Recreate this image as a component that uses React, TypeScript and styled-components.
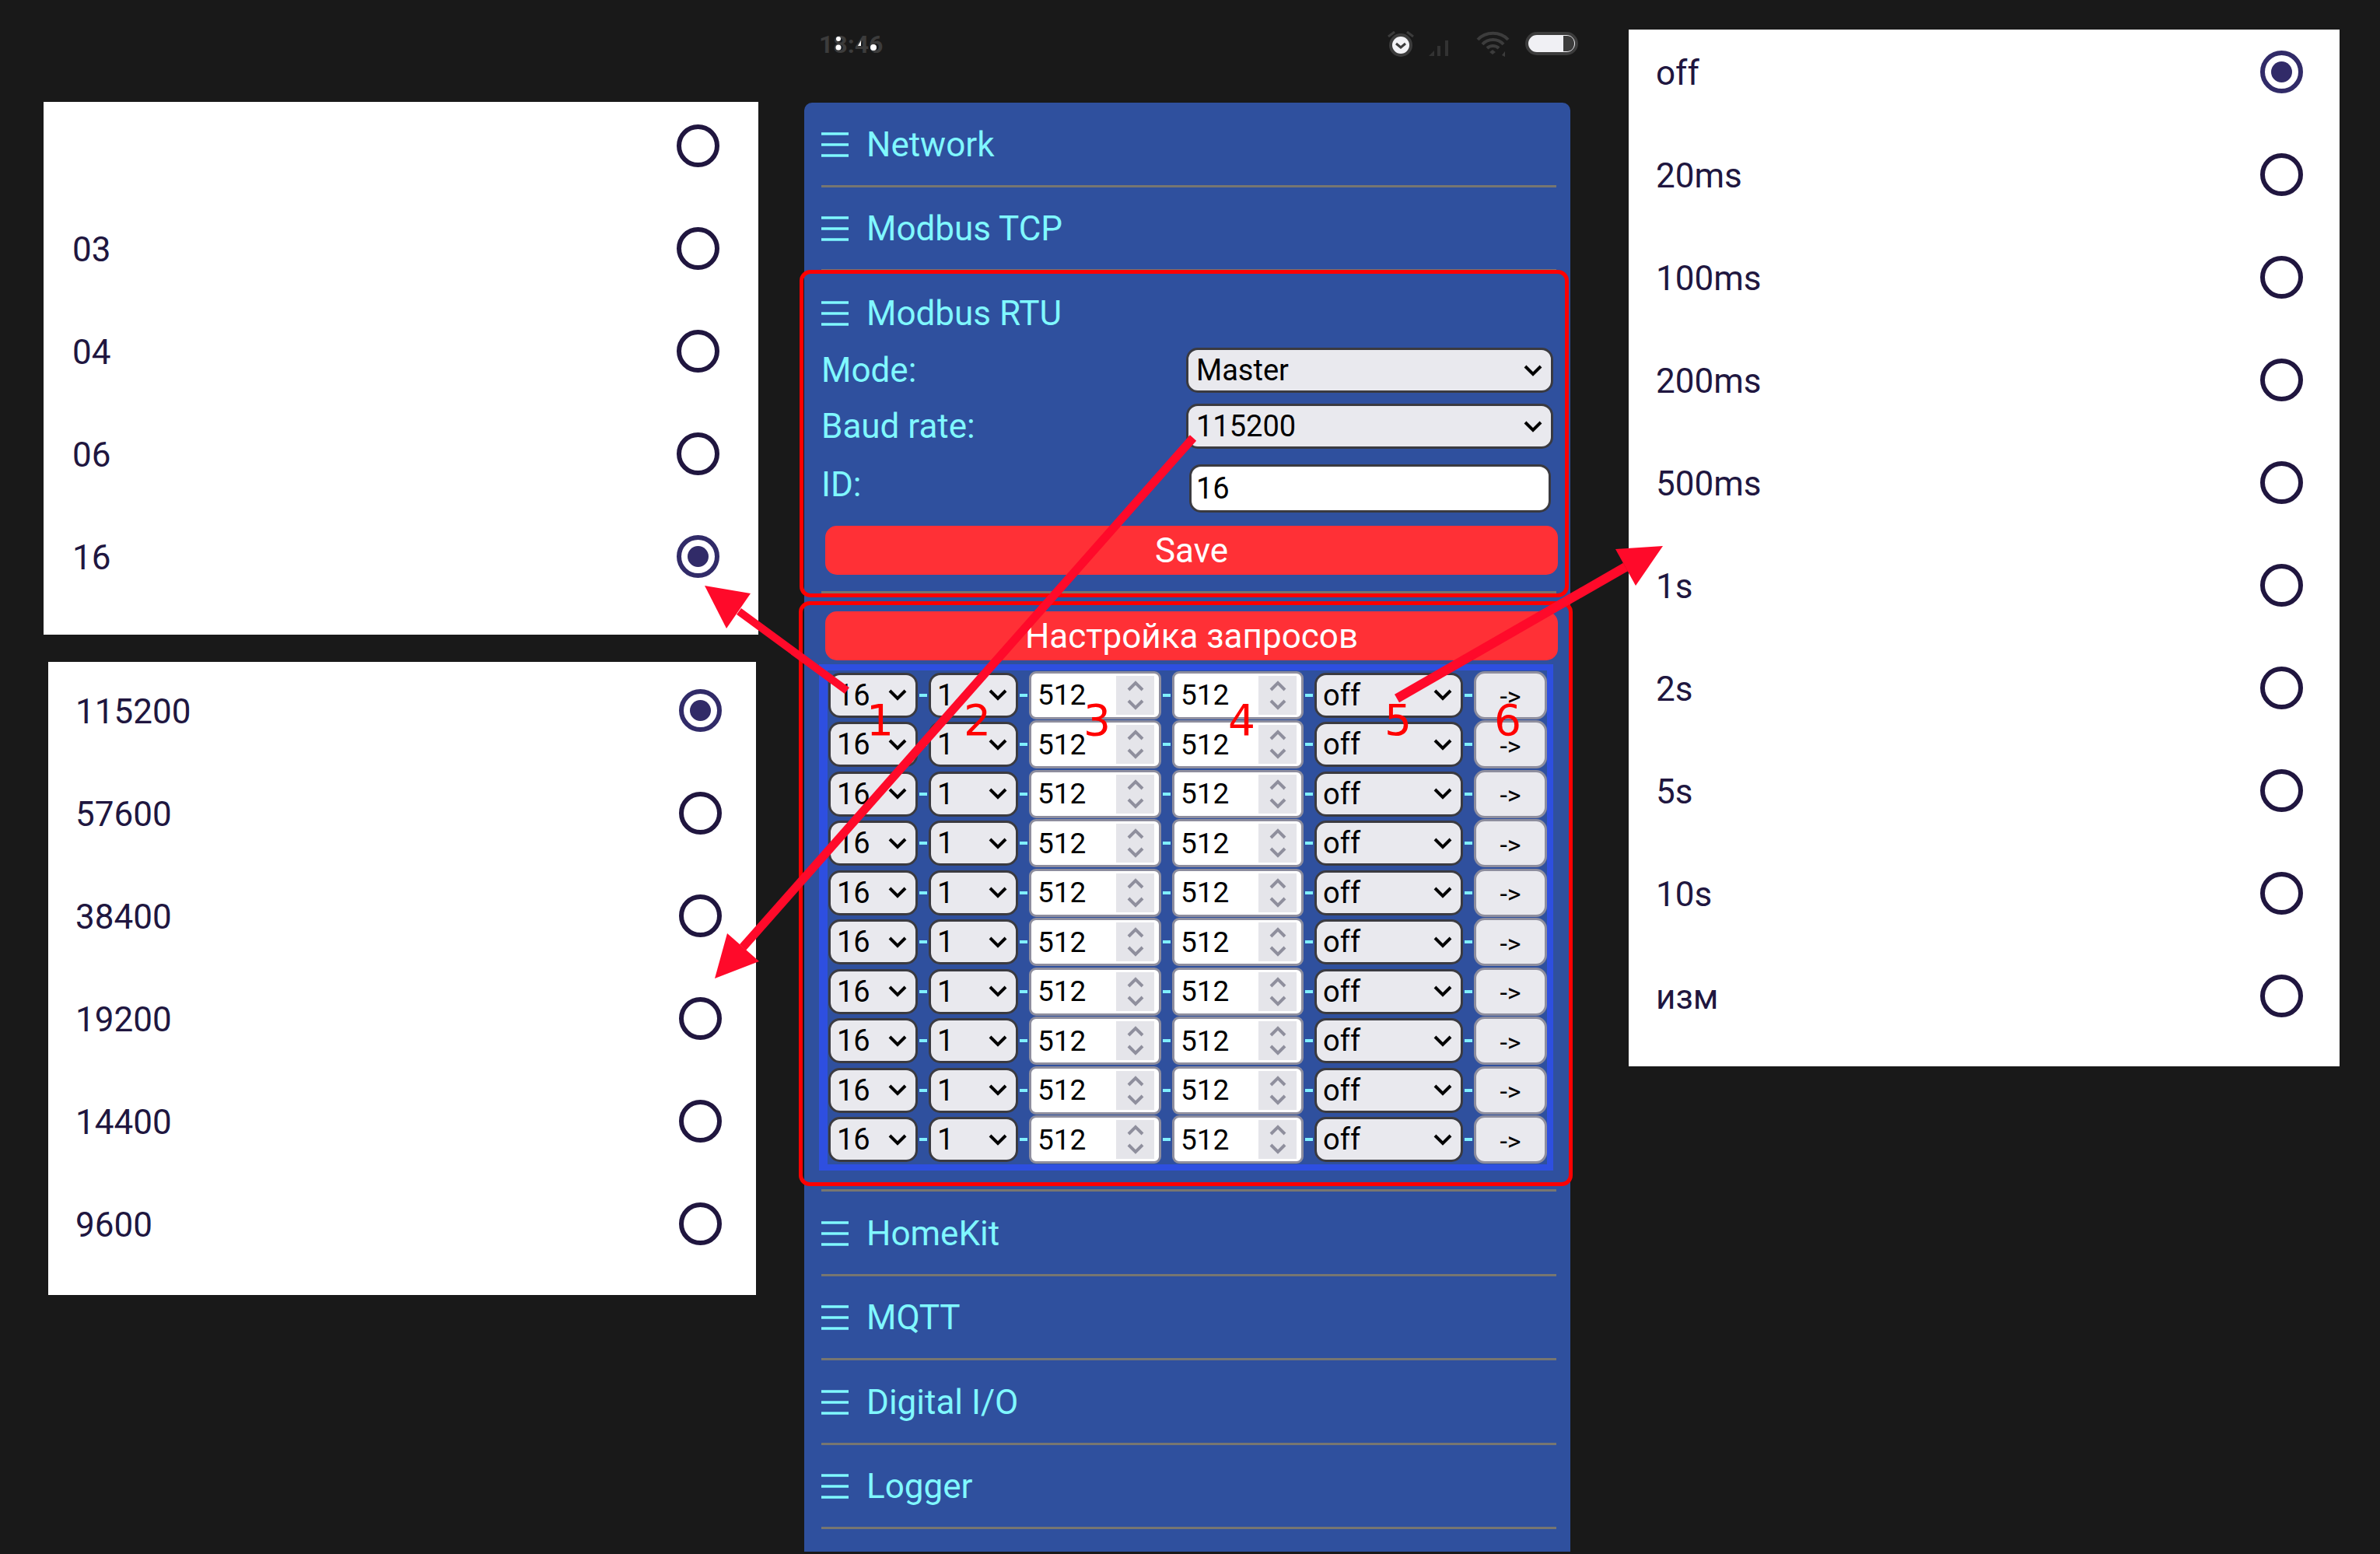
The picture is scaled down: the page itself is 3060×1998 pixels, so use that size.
import React from 'react';
import styled, { createGlobalStyle } from 'styled-components';

const Global = createGlobalStyle`
  html, body { margin: 0; padding: 0; background: #191919; }
  * { box-sizing: border-box; }
`;

const Page = styled.div`
  position: relative;
  width: 3060px;
  height: 1998px;
  overflow: hidden;
  display: flex;
  align-items: flex-start;
  background: #191919;
  font-family: Roboto, "Liberation Sans", sans-serif;
`;

const LeftColumn = styled.div`
  width: 919px;
  margin: 131px 0 0 56px;
  display: flex;
  flex-direction: column;
  align-items: flex-start;
  gap: 35px;
`;

const OptionPanel = styled.div<{ $w: number; $ml?: number; $pt: number; $pb: number; $pl: number; $pr: number; $row: number; $gap: number }>`
  width: ${p => p.$w}px;
  margin-left: ${p => p.$ml ?? 0}px;
  padding: ${p => p.$pt}px ${p => p.$pr}px ${p => p.$pb}px ${p => p.$pl}px;
  background: #fff;
  display: flex;
  flex-direction: column;
  gap: ${p => p.$gap}px;
  & > div { height: ${p => p.$row}px; }
`;

const OptionRow = styled.div`
  display: flex;
  align-items: center;
  justify-content: space-between;
  font-size: 44px;
  color: #20163f;
`;

const OptionLabel = styled.span`
  position: relative;
  top: 2px;
`;

const Radio = styled.span<{ $on?: boolean }>`
  width: 55px;
  height: 55px;
  flex: none;
  border-radius: 50%;
  border: 6px solid ${p => (p.$on ? '#312b68' : '#20163f')};
  display: flex;
  align-items: center;
  justify-content: center;
  &::after {
    content: '';
    display: ${p => (p.$on ? 'block' : 'none')};
    width: 27px;
    height: 27px;
    border-radius: 50%;
    background: #312b68;
  }
`;

const Phone = styled.div`
  width: 985px;
  margin-left: 59px;
  display: flex;
  flex-direction: column;
`;

const StatusBar = styled.div`
  height: 132px;
  margin-right: -10px;
  padding: 40px 0 0 19px;
  display: flex;
  align-items: flex-start;
  justify-content: space-between;
`;

const Time = styled.div`
  position: relative;
  font-size: 32px;
  font-weight: 700;
  line-height: 34px;
  color: #3c3c3c;
`;

const TimeCounters = styled.svg`
  position: absolute;
  left: 0;
  top: -2px;
`;

const StatusIcons = styled.div`
  display: flex;
  align-items: flex-start;
`;

const StatusIcon = styled.svg<{ $ml: number }>`
  margin-left: ${p => p.$ml}px;
  display: block;
`;

const Panel = styled.div`
  background: #2f509e;
  border-radius: 10px 10px 0 0;
  padding: 0 18px 29px 22px;
`;

const Section = styled.div`
  border-bottom: 3px solid #777671;
`;

const Header = styled.div<{ $open?: boolean }>`
  height: ${p => (p.$open ? '98px' : '105.5px')};
  padding-top: ${p => (p.$open ? '10px' : '2px')};
  display: flex;
  align-items: center;
  gap: 23px;
  font-size: 44px;
  color: #80f8ff;
`;

const FieldRow = styled.div<{ $h: number; $mb: number }>`
  height: ${p => p.$h}px;
  margin-bottom: ${p => p.$mb}px;
  padding-right: 4px;
  display: flex;
  align-items: center;
  justify-content: space-between;
`;

const FieldLabel = styled.span<{ $up?: number }>`
  font-size: 44px;
  color: #80f8ff;
  position: relative;
  top: ${p => -(p.$up ?? 0)}px;
`;

const SelectBox = styled.div<{ $w: number; $pl?: number }>`
  width: ${p => p.$w}px;
  height: 58px;
  flex: none;
  padding: 0 11px 0 ${p => p.$pl ?? 8}px;
  display: flex;
  align-items: center;
  justify-content: space-between;
  background: #e9e9ee;
  border: 3px solid #3a3a40;
  border-radius: 15px;
  font-size: 38px;
  color: #000;
`;

const TextInput = styled.div`
  width: 465px;
  height: 62px;
  margin-right: 3px;
  padding-left: 6px;
  display: flex;
  align-items: center;
  background: #fff;
  border: 3px solid #3a3a40;
  border-radius: 15px;
  font-size: 38px;
  color: #000;
`;

const RedButton = styled.div<{ $mt?: number; $mb?: number }>`
  height: 63px;
  margin: ${p => p.$mt ?? 0}px -2px ${p => p.$mb ?? 0}px 5px;
  display: flex;
  align-items: center;
  justify-content: center;
  background: #ff3036;
  border-radius: 15px;
  font-size: 44px;
  color: #fff;
`;

const BlueFrame = styled.div`
  margin: 0 4px 24px -3px;
  border-style: solid;
  border-color: #2e4fe0;
  border-width: 8px 8px 8px 11px;
  display: flex;
  flex-direction: column;
`;

const QueryRow = styled.div`
  height: 63.5px;
  padding-left: 1px;
  display: flex;
  align-items: center;
`;

const Dash = styled.span`
  width: 10px;
  height: 4px;
  margin: 0 2px;
  flex: none;
  background: #80f0ff;
`;

const NumberBox = styled.div<{ $w: number }>`
  position: relative;
  width: ${p => p.$w}px;
  height: 62px;
  flex: none;
  padding-left: 8px;
  display: flex;
  align-items: center;
  background: #fff;
  border: 3px solid #8e8e9e;
  border-radius: 9px;
  font-size: 37px;
  color: #000;
`;

const Spinner = styled.span`
  position: absolute;
  right: 6px;
  top: 3px;
  width: 49px;
  height: 50px;
  background: #e5e5ea;
  display: flex;
  align-items: center;
  justify-content: center;
`;

const GoButton = styled.div`
  width: 94px;
  height: 62px;
  flex: none;
  padding-top: 3px;
  display: flex;
  align-items: center;
  justify-content: center;
  background: #e9e9ee;
  border: 3px solid #8e8e9e;
  border-radius: 14px;
  font-size: 34px;
  color: #000;
`;

const RightPanelSlot = styled.div`
  margin: 38px 0 0 75px;
`;

const Outline = styled.div<{ $x: number; $y: number; $w: number; $h: number }>`
  position: absolute;
  left: ${p => p.$x}px;
  top: ${p => p.$y}px;
  width: ${p => p.$w}px;
  height: ${p => p.$h}px;
  border: 5px solid #ff0000;
  border-radius: 14px;
  pointer-events: none;
`;

const Marker = styled.span<{ $x: number }>`
  position: absolute;
  left: ${p => p.$x}px;
  top: 899px;
  font-family: "DejaVu Sans", sans-serif;
  font-size: 55px;
  line-height: 55px;
  color: #ff0000;
`;

const ArrowLayer = styled.svg`
  position: absolute;
  left: 0;
  top: 0;
  pointer-events: none;
`;

const Chevron = () => (
  <svg width="24" height="15" viewBox="0 0 24 15">
    <path d="M2 2 L12 12 L22 2" fill="none" stroke="#000" strokeWidth="4" />
  </svg>
);

const SpinArrows = () => (
  <svg width="24" height="42" viewBox="0 0 24 42">
    <path d="M3 14 L12 5 L21 14 M3 28 L12 37 L21 28" fill="none" stroke="#8f8f9d" strokeWidth="4" />
  </svg>
);

const Burger = () => (
  <svg width="35" height="32" viewBox="0 0 35 32">
    <path d="M0 2 H35 M0 16 H35 M0 30 H35" stroke="#80f8ff" strokeWidth="3.5" />
  </svg>
);

const Options = ({ items, on }: { items: string[]; on: number }) => (
  <>
    {items.map((t, i) => (
      <OptionRow key={i}>
        <OptionLabel>{t}</OptionLabel>
        <Radio $on={i === on} />
      </OptionRow>
    ))}
  </>
);

const Item = ({ title }: { title: string }) => (
  <Section>
    <Header>
      <Burger />
      {title}
    </Header>
  </Section>
);

const rows = Array.from({ length: 10 }, (_, i) => i);

export default function App() {
  return (
    <Page>
      <Global />
      <LeftColumn>
        <OptionPanel $w={919} $pt={0} $pb={45} $pl={37} $pr={50} $row={112} $gap={20}>
          <Options items={['', '03', '04', '06', '16']} on={4} />
        </OptionPanel>
        <OptionPanel $w={910} $ml={6} $pt={6} $pb={36} $pl={35} $pr={44} $row={112} $gap={20}>
          <Options items={['115200', '57600', '38400', '19200', '14400', '9600']} on={0} />
        </OptionPanel>
      </LeftColumn>

      <Phone>
        <StatusBar>
          <Time>
            18:46
            <TimeCounters width="80" height="36" viewBox="0 0 80 36">
              <circle cx="25" cy="12" r="3" fill="#fff" />
              <circle cx="25" cy="23" r="3.5" fill="#fff" />
              <path d="M50 21 L54 14 V21 Z" fill="#fff" />
              <circle cx="70" cy="23" r="4" fill="#fff" />
            </TimeCounters>
          </Time>
          <StatusIcons>
            <StatusIcon $ml={0} width="34" height="34" viewBox="0 0 34 34">
              <circle cx="17" cy="18" r="15" fill="#3c3c3c" />
              <circle cx="17" cy="18" r="11" fill="#f2f2f5" />
              <path d="M11 16 L17 21 L23 16" fill="none" stroke="#3c3c3c" strokeWidth="3" />
              <path d="M1 7 L9 1 M33 7 L25 1" stroke="#3c3c3c" strokeWidth="3" />
            </StatusIcon>
            <StatusIcon $ml={19} width="27" height="34" viewBox="0 0 27 34">
              <path d="M0 32 L7 25 V32 Z" fill="#333" />
              <rect x="11" y="19" width="4" height="13" fill="#333" />
              <rect x="21" y="12" width="4" height="20" fill="#333" />
            </StatusIcon>
            <StatusIcon $ml={34} width="43" height="34" viewBox="0 0 43 34">
              <path d="M2 11 C12 0 31 0 41 11 M8 17 C15 9 28 9 35 17 M14 22 C18 18 25 18 29 22" fill="none" stroke="#3c3c3c" strokeWidth="4" />
              <path d="M17 27 L21 24 L25 27 L21 30 Z" fill="#3c3c3c" />
              <path d="M37 26 V33 L33 31 Z" fill="#3c3c3c" />
            </StatusIcon>
            <StatusIcon $ml={20} width="68" height="32" viewBox="0 0 68 32">
              <rect x="2" y="3" width="64" height="26" rx="13" fill="#f0f0f4" stroke="#3c3c3c" strokeWidth="4" />
              <path d="M49 6 H54 C59 6 63 10 63 16 C63 22 59 26 54 26 H49 Z" fill="#3c3c3c" />
            </StatusIcon>
          </StatusIcons>
        </StatusBar>

        <Panel>
          <Item title="Network" />
          <Item title="Modbus TCP" />
          <Section>
            <Header $open>
              <Burger />
              Modbus RTU
            </Header>
            <FieldRow $h={58} $mb={14}>
              <FieldLabel>Mode:</FieldLabel>
              <SelectBox $w={472} $pl={10}>
                Master
                <Chevron />
              </SelectBox>
            </FieldRow>
            <FieldRow $h={58} $mb={20}>
              <FieldLabel>Baud rate:</FieldLabel>
              <SelectBox $w={472} $pl={10}>
                115200
                <Chevron />
              </SelectBox>
            </FieldRow>
            <FieldRow $h={62} $mb={17}>
              <FieldLabel $up={5}>ID:</FieldLabel>
              <TextInput>16</TextInput>
            </FieldRow>
            <RedButton $mb={21}>Save</RedButton>
          </Section>
          <Section>
            <RedButton $mt={23} $mb={5}>Настройка запросов</RedButton>
            <BlueFrame>
              {rows.map(i => (
                <QueryRow key={i}>
                  <SelectBox $w={115}>
                    16
                    <Chevron />
                  </SelectBox>
                  <Dash />
                  <SelectBox $w={115}>
                    1
                    <Chevron />
                  </SelectBox>
                  <Dash />
                  <NumberBox $w={170}>
                    512
                    <Spinner>
                      <SpinArrows />
                    </Spinner>
                  </NumberBox>
                  <Dash />
                  <NumberBox $w={169}>
                    512
                    <Spinner>
                      <SpinArrows />
                    </Spinner>
                  </NumberBox>
                  <Dash />
                  <SelectBox $w={191}>
                    off
                    <Chevron />
                  </SelectBox>
                  <Dash />
                  <GoButton>-&gt;</GoButton>
                </QueryRow>
              ))}
            </BlueFrame>
          </Section>
          <Item title="HomeKit" />
          <Item title="MQTT" />
          <Item title="Digital I/O" />
          <Item title="Logger" />
        </Panel>
      </Phone>

      <RightPanelSlot>
        <OptionPanel $w={914} $pt={0} $pb={37} $pl={35} $pr={47} $row={108} $gap={24}>
          <Options items={['off', '20ms', '100ms', '200ms', '500ms', '1s', '2s', '5s', '10s', 'изм']} on={0} />
        </OptionPanel>
      </RightPanelSlot>

      <Outline $x={1028} $y={347} $w={989} $h={421} />
      <Outline $x={1027} $y={773} $w={995} $h={752} />

      <ArrowLayer width="3060" height="1998" viewBox="0 0 3060 1998">
        <g fill="#ff0a2a" stroke="none">
          <path d="M1089 888 L950 786" stroke="#ff0a2a" strokeWidth="10" fill="none" />
          <polygon points="906,753 965,763 934,808" />
          <path d="M1534 563 L955 1218" stroke="#ff0a2a" strokeWidth="11" fill="none" />
          <polygon points="919,1258 935,1200 976,1236" />
          <path d="M1796 898 L2090 729" stroke="#ff0a2a" strokeWidth="12" fill="none" />
          <polygon points="2138,702 2077,706 2103,753" />
        </g>
      </ArrowLayer>

      <Marker $x={1114}>1</Marker>
      <Marker $x={1239}>2</Marker>
      <Marker $x={1393}>3</Marker>
      <Marker $x={1579}>4</Marker>
      <Marker $x={1780}>5</Marker>
      <Marker $x={1921}>6</Marker>
    </Page>
  );
}
